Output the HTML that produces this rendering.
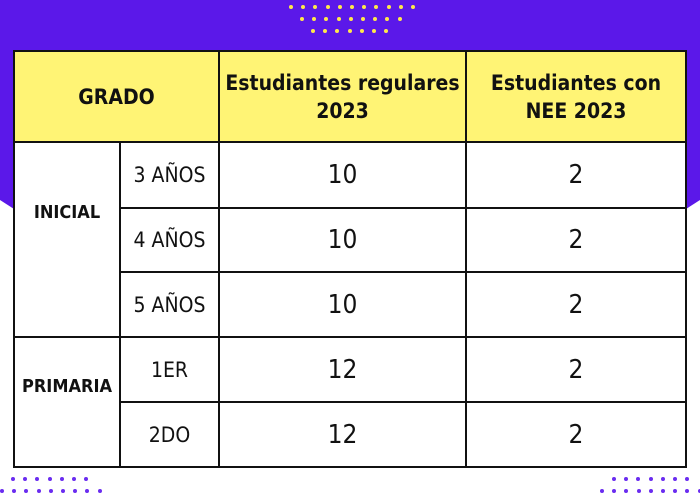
<!DOCTYPE html><html><head><style>
body{margin:0;width:700px;height:500px;background:#fff;position:relative;overflow:hidden;font-family:"DejaVu Sans Condensed","DejaVu Sans","Liberation Sans",sans-serif}
.bg{position:absolute;left:0;top:0;width:700px;height:212px;background:#5b18e9;clip-path:polygon(0 0,700px 0,700px 200px,686px 209px,14px 209px,0 200px)}
.d{position:absolute;width:4px;height:4px;border-radius:50%}
table{position:absolute;left:13px;top:50px;border-collapse:collapse;table-layout:fixed}
td{border:2px solid #111;text-align:center;padding:0;background:#fff;color:#111}
th{border:2px solid #111;background:#fff475;font-weight:bold;font-size:21px;line-height:28px;color:#111}
.n{font-size:26px}.g{font-size:21px}.b{font-weight:bold;font-size:18px}
</style></head><body>
<div class="bg"></div>
<div id="dots"></div>
<table>
<colgroup><col style="width:106px"><col style="width:99px"><col style="width:247px"><col style="width:220px"></colgroup>
<tr style="height:91px"><th colspan="2">GRADO</th><th>Estudiantes regulares<br>2023</th><th>Estudiantes con<br>NEE 2023</th></tr>
<tr style="height:66px"><td rowspan="3" class="b" style="vertical-align:top;padding-top:59px">INICIAL</td><td class="g">3 AÑOS</td><td class="n">10</td><td class="n">2</td></tr>
<tr style="height:64px"><td class="g">4 AÑOS</td><td class="n">10</td><td class="n">2</td></tr>
<tr style="height:65px"><td class="g">5 AÑOS</td><td class="n">10</td><td class="n">2</td></tr>
<tr style="height:65px"><td rowspan="2" class="b" style="vertical-align:top;padding-top:38px">PRIMARIA</td><td class="g">1ER</td><td class="n">12</td><td class="n">2</td></tr>
<tr style="height:65px"><td class="g">2DO</td><td class="n">12</td><td class="n">2</td></tr>
</table>
<script>
var h='';function row(x0,n,y,c,s){for(var i=0;i<n;i++)h+='<div class="d" style="left:'+(x0+i*s)+'px;top:'+y+'px;background:'+c+'"></div>';}
var Y='#ffe94a',P='#6a2cf0';
row(289,11,5,Y,12.2);row(300,9,17,Y,12.2);row(311,7,29,Y,12.2);
row(11,7,477,P,12.2);row(0,9,489,P,12.2);row(612,7,477,P,12.2);row(600,9,489,P,12.2);
document.getElementById('dots').innerHTML=h;
</script>
</body></html>
